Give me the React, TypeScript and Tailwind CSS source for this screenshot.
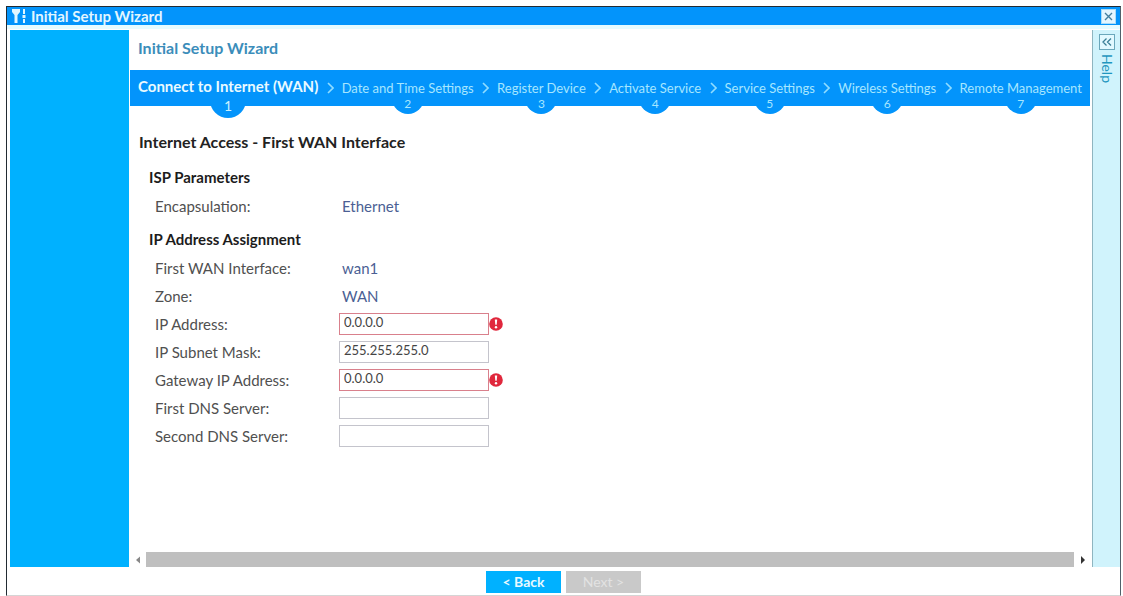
import { useState } from 'react'

const steps = [
  'Connect to Internet (WAN)',
  'Date and Time Settings',
  'Register Device',
  'Activate Service',
  'Service Settings',
  'Wireless Settings',
  'Remote Management',
]

function ToolsIcon() {
  return (
    <svg width="16" height="16" viewBox="0 0 16 16" fill="#e2f6ff" aria-hidden="true">
      <path d="M1 1h8v3L6.500 7v8h-3V7L1 4z" />
      <path d="M12 1h2v5h-2zM11.500 7h3v3h-3zM12 11h2v4h-2z" />
    </svg>
  )
}

function Chevron() {
  return (
    <svg
      width="7"
      height="12"
      viewBox="0 0 7 12"
      fill="none"
      stroke="#8fdcff"
      strokeWidth="1.6"
      className="shrink-0"
      aria-hidden="true"
    >
      <path d="M1 1l5 5-5 5" />
    </svg>
  )
}

function ErrorIcon() {
  return (
    <svg width="14" height="14" viewBox="0 0 14 14" role="img" aria-label="Invalid value">
      <circle cx="7" cy="7" r="6.8" fill="#e0273c" />
      <path d="M5.8 2.6h2.4l-.5 5.2H6.3z" fill="#fff" />
      <circle cx="7" cy="10.2" r="1.2" fill="#fff" />
    </svg>
  )
}

function StepBar() {
  return (
    <nav className="bg-[#0394fb] h-9 pl-2 pr-2">
      <ol className="flex h-full items-stretch justify-between">
        {steps.map((step, i) => (
          <li key={step} className="flex items-center gap-2">
            {i > 0 && <Chevron />}
            <div className="relative flex h-full items-center justify-center">
              {i === 0 ? (
                <>
                  <span className="absolute top-7 flex h-5 w-9 items-end justify-center rounded-b-full bg-[#0394fb] pb-1 text-sm leading-4 text-[#c9f0ff]">
                    1
                  </span>
                  <span className="relative pb-1 text-[15px] leading-4 font-bold text-[#e9faff] whitespace-nowrap">
                    {step}
                  </span>
                </>
              ) : (
                <>
                  <span className="absolute top-6 flex h-5 w-8 items-end justify-center rounded-b-full bg-[#0394fb] pb-0.5 text-xs leading-4 text-[#a6e6ff]">
                    {i + 1}
                  </span>
                  <span className="relative text-[13px] leading-4 text-[#a6e6ff] whitespace-nowrap">{step}</span>
                </>
              )}
            </div>
          </li>
        ))}
      </ol>
    </nav>
  )
}

function InfoRow({ label, value }: { label: string; value: string }) {
  return (
    <div className="flex h-7 items-center">
      <dt className="w-[187px] text-[#505050]">{label}</dt>
      <dd className="text-[#4b5f94]">{value}</dd>
    </div>
  )
}

interface FieldProps {
  id: string
  label: string
  initial?: string
  invalid?: boolean
}

function FieldRow({ id, label, initial = '', invalid = false }: FieldProps) {
  const [value, setValue] = useState(initial)

  return (
    <div className="flex h-7 items-center">
      <label htmlFor={id} className="w-[184px] text-[#505050]">
        {label}
      </label>
      <input
        id={id}
        type="text"
        value={value}
        aria-invalid={invalid}
        onChange={(e) => setValue(e.target.value)}
        className={`h-[22px] w-[150px] border bg-white px-1 pb-1 text-[13px] leading-4 text-[#444] outline-none ${
          invalid ? 'border-[#d9808c]' : 'border-[#c4c4cc]'
        }`}
      />
      {invalid && <ErrorIcon />}
    </div>
  )
}

// Horizontal scroll track under the wizard content
function ScrollTrack() {
  return (
    <div className="flex h-[15px] items-center gap-[5px] px-1">
      <svg width="7" height="8" viewBox="0 0 7 8" fill="#888" aria-hidden="true">
        <path d="M6 .5v7L2 4z" />
      </svg>
      <div className="h-full flex-1 bg-[#bfbfbf]" />
      <svg width="7" height="8" viewBox="0 0 7 8" fill="#333" aria-hidden="true">
        <path d="M2 0v8l4-4z" />
      </svg>
    </div>
  )
}

export default function App() {
  return (
    <div className="flex min-h-screen flex-col bg-white pl-1.5 pr-0.5 pt-1.5 font-['Lato',sans-serif]">
      <div className="flex flex-1 flex-col border border-[#222b33] border-r-[#50606a] border-b-[#d5d5d5]">
        <header className="flex h-[18px] items-center bg-[#0394fb] pl-1">
          <ToolsIcon />
          <h1 className="ml-1 flex-1 text-[15px] leading-4 font-bold text-[#e2f6ff]">Initial Setup Wizard</h1>
          <button
            aria-label="Close"
            className="mr-1 flex h-[15px] w-[15px] items-center justify-center border border-[#a9dcf8] bg-[#e4f6ff]"
          >
            <svg width="9" height="9" viewBox="0 0 9 9" stroke="#45809f" strokeWidth="1.4" aria-hidden="true">
              <path d="M1 1l7 7M8 1L1 8" />
            </svg>
          </button>
        </header>

        <div className="flex flex-1 border-t-4 border-[#e6fbff] pl-[3px] pt-px">
          <aside className="w-[119px] shrink-0 bg-[#00b1ff]" />

          <main className="ml-px flex min-w-0 flex-1 flex-col">
            <h2 className="flex h-10 items-center pl-2 pb-1 text-base font-bold text-[#3b8dba]">
              Initial Setup Wizard
            </h2>
            <StepBar />

            <div className="flex-1 pl-[9px] pt-6 text-[15px]">
              <h3 className="text-base leading-6 font-bold text-[#222]">Internet Access - First WAN Interface</h3>

              <section className="pl-2.5 pt-3">
                <h4 className="leading-[22px] font-bold text-[#1c1c1c]">ISP Parameters</h4>
                <dl className="pl-1.5 pt-1">
                  <InfoRow label="Encapsulation:" value="Ethernet" />
                </dl>
              </section>

              <section className="pl-2.5 pt-2">
                <h4 className="leading-[22px] font-bold text-[#1c1c1c]">IP Address Assignment</h4>
                <dl className="pl-1.5 pt-1">
                  <InfoRow label="First WAN Interface:" value="wan1" />
                  <InfoRow label="Zone:" value="WAN" />
                </dl>
                <form className="pl-1.5" onSubmit={(e) => e.preventDefault()}>
                  <FieldRow id="ip-address" label="IP Address:" initial="0.0.0.0" invalid />
                  <FieldRow id="subnet-mask" label="IP Subnet Mask:" initial="255.255.255.0" />
                  <FieldRow id="gateway" label="Gateway IP Address:" initial="0.0.0.0" invalid />
                  <FieldRow id="dns-first" label="First DNS Server:" />
                  <FieldRow id="dns-second" label="Second DNS Server:" />
                </form>
              </section>
            </div>

            <ScrollTrack />
          </main>

          <div className="ml-0.5 flex w-7 shrink-0 flex-col items-center border-l border-[#8fb5c0] bg-[#d0f3fc] pt-1">
            <button
              aria-label="Expand help"
              className="flex h-4 w-4 items-center justify-center border border-[#6aa7bb] bg-[#e2f9ff]"
            >
              <svg
                width="10"
                height="8"
                viewBox="0 0 10 8"
                fill="none"
                stroke="#3b7f97"
                strokeWidth="1.3"
                aria-hidden="true"
              >
                <path d="M4.500 .5L1 4l3.500 3.500M9 .5L5.500 4 9 7.500" />
              </svg>
            </button>
            <span className="mt-1 text-sm text-[#1f96bf] [writing-mode:vertical-rl]">Help</span>
          </div>
        </div>

        <footer className="flex h-7 items-center justify-center gap-[5px] pt-1 pb-0.5">
          <button className="h-[22px] w-[75px] bg-[#00b1ff] text-sm leading-4 font-bold text-[#e9faff]">
            &lt; Back
          </button>
          <button disabled className="h-[22px] w-[75px] bg-[#c9c9c9] text-sm leading-4 text-[#e2e2e2]">
            Next &gt;
          </button>
        </footer>
      </div>
    </div>
  )
}
